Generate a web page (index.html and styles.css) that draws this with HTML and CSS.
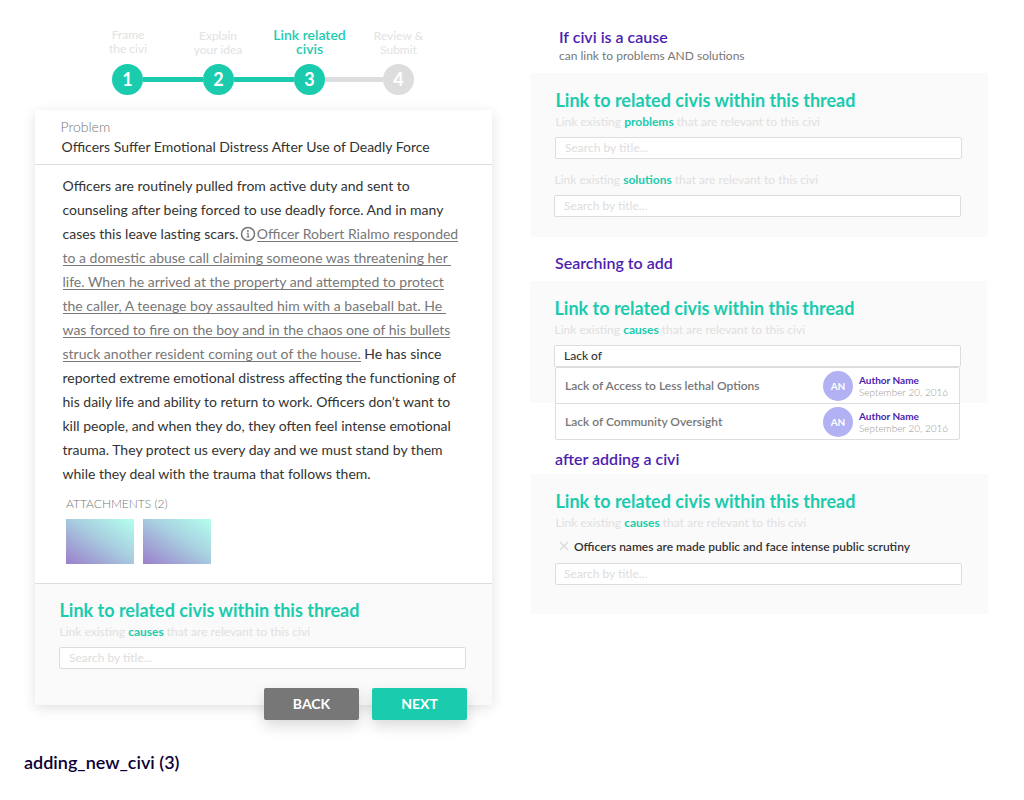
FILE: index.html
```html
<!DOCTYPE html>
<html lang="en">
<head>
<meta charset="utf-8">
<title>adding_new_civi</title>
<link rel="stylesheet" href="styles.css">
</head>
<body>
<div class="page">
  <main class="editor">
    <div class="stepper">
      <div class="step-labels">
        <div class="step-label first">Frame<br>the civi</div>
        <div class="step-label">Explain<br>your idea</div>
        <div class="step-label current">Link related<br>civis</div>
        <div class="step-label last">Review &amp;<br>Submit</div>
      </div>
      <div class="track">
        <span class="dot">1</span><span class="bar"></span><span class="dot">2</span><span class="bar"></span><span class="dot">3</span><span class="bar todo"></span><span class="dot todo">4</span>
      </div>
    </div>
    <section class="card">
      <header class="card-head">
        <div class="kind">Problem</div>
        <h1 class="title">Officers Suffer Emotional Distress After Use of Deadly Force</h1>
      </header>
      <div class="card-body">
        <p class="story">Officers are routinely pulled from active duty and sent to<br>counseling after being forced to use deadly force. And in many<br>cases this leave lasting scars.<svg class="info" viewBox="0 0 16 16"><circle cx="8" cy="8" r="6.5" fill="none" stroke="#777" stroke-width="1.5"/><circle cx="7.9" cy="5" r=".9" fill="#777"/><path d="M6.8 7.3H8.1V11M6.6 11H9.4" fill="none" stroke="#777" stroke-width="1.1"/></svg><span class="ref">Officer Robert Rialmo responded</span><br><span class="ref">to a domestic abuse call claiming someone was threatening her&nbsp;</span><br><span class="ref">life. When he arrived at the property and attempted to protect</span><br><span class="ref">the caller, A teenage boy assaulted him with a baseball bat. He&nbsp;</span><br><span class="ref">was forced to fire on the boy and in the chaos one of his bullets</span><br><span class="ref">struck another resident coming out of the house.</span> He has since<br>reported extreme emotional distress affecting the functioning of<br>his daily life and ability to return to work. Officers don’t want to<br>kill people, and when they do, they often feel intense emotional<br>trauma. They protect us every day and we must stand by them<br>while they deal with the trauma that follows them.</p>
        <div class="attach-label">ATTACHMENTS (2)</div>
        <div class="attachments"><div class="thumb"></div><div class="thumb"></div></div>
      </div>
      <footer class="card-foot">
        <h2 class="heading">Link to related civis within this thread</h2>
        <p class="hint">Link existing <b>causes</b> that are relevant to this civi</p>
        <div class="field">Search by title...</div>
        <div class="actions"><button class="btn back">BACK</button><button class="btn next">NEXT</button></div>
      </footer>
    </section>
    <div class="caption">adding_new_civi (3)</div>
  </main>
  <aside class="notes">
    <h3 class="note cause">If civi is a cause</h3>
    <p class="subnote">can link to problems AND solutions</p>
    <section class="panel two">
      <h2 class="heading">Link to related civis within this thread</h2>
      <p class="hint">Link existing <b>problems</b> that are relevant to this civi</p>
      <div class="field">Search by title...</div>
      <div class="second">
        <p class="hint">Link existing <b>solutions</b> that are relevant to this civi</p>
        <div class="field">Search by title...</div>
      </div>
    </section>
    <h3 class="note searching">Searching to add</h3>
    <section class="panel search">
      <h2 class="heading">Link to related civis within this thread</h2>
      <p class="hint">Link existing <b>causes</b> that are relevant to this civi</p>
      <div class="field typed">Lack of</div>
      <div class="results">
        <div class="result"><span class="name">Lack of Access to Less lethal Options</span><span class="avatar">AN</span><span class="by"><b>Author Name</b><span>September 20, 2016</span></span></div>
        <div class="result"><span class="name">Lack of Community Oversight</span><span class="avatar">AN</span><span class="by"><b>Author Name</b><span>September 20, 2016</span></span></div>
      </div>
    </section>
    <h3 class="note after">after adding a civi</h3>
    <section class="panel added">
      <h2 class="heading">Link to related civis within this thread</h2>
      <p class="hint">Link existing <b>causes</b> that are relevant to this civi</p>
      <div class="chosen"><svg class="remove" viewBox="0 0 10 10"><path d="M1 1L9 9M9 1L1 9" stroke="#d8d8d8" stroke-width="1.1"/></svg><span>Officers names are made public and face intense public scrutiny</span></div>
      <div class="field near">Search by title...</div>
    </section>
  </aside>
</div>
</body>
</html>
```
FILE: styles.css
```css
* { box-sizing: border-box; }
body, h1, h2, h3, p { margin: 0; font-weight: inherit; }
body { font-family: Lato, "Liberation Sans", sans-serif; background: #fff; color: #333; white-space: nowrap; }
.page { display: flex; width: 1024px; height: 800px; overflow: hidden; }
.editor { width: 492px; flex: none; padding: 28px 0 0 35px; }

.stepper { height: 82px; }
.step-labels { display: flex; padding-left: 48px; height: 36px; font-size: 12px; line-height: 14px; color: #e2e2e2; }
.step-label { width: 90px; text-align: center; padding-top: 1px; }
.step-label.first { padding-top: 0; }
.step-label.current { width: 93px; padding-top: 0; font-size: 14px; font-weight: 600; color: #1bcbae; }
.step-label.last { width: 85px; }
.track { display: flex; align-items: center; padding-left: 77px; }
.dot { width: 31px; height: 31px; border-radius: 50%; background: #1bcbae; color: #fff; font-size: 18px; font-weight: 700; line-height: 30px; text-align: center; }
.bar { width: 60px; height: 5px; background: #1bcbae; }
.bar.todo { width: 58px; background: #ddd; }
.dot.todo { background: #ddd; }

.card { width: 457px; height: 595px; border-radius: 3px; box-shadow: 0 3px 13px rgba(0,0,0,.12); display: flex; flex-direction: column; }
.card-head { flex: none; height: 55px; padding: 9px 0 0 25.5px; border-bottom: 1px solid #ddd; }
.kind { font-size: 14px; line-height: 16px; font-weight: 300; color: #777; }
.title { padding-left: 1px; font-size: 14px; line-height: 24px; font-weight: 400; color: #333; }
.card-body { flex: none; height: 419px; padding: 9px 0 0 27.5px; border-bottom: 1px solid #ddd; }
.story { font-size: 14px; line-height: 24px; }
.ref { display: inline-block; height: 20px; line-height: 24px; border-bottom: 1px solid #777; color: #777; vertical-align: top; }
.info { width: 16px; height: 16px; margin: 0 1px 0 1.5px; vertical-align: -3px; }
.attach-label { margin: 10px 0 0 3.5px; font-size: 12px; line-height: 16px; font-weight: 300; color: #777; }
.attachments { display: flex; gap: 9px; margin: 7px 0 0 3.5px; }
.thumb { width: 68px; height: 45px; background: linear-gradient(to top right, #9b7fcb, #a8cfe0 55%, #b4ffee); }
.card-foot { flex: 1; min-height: 0; background: #fafafa; padding: 14px 25px 0 24px; border-radius: 0 0 3px 3px; }

.heading { padding-left: .5px; font-size: 18px; line-height: 24px; font-weight: 700; color: #1bcbae; }
.hint { padding-left: .5px; margin-top: 2px; font-size: 12px; line-height: 16px; font-weight: 400; color: #e0e0e0; }
.hint b { font-weight: 700; color: #1bcbae; }
.field { width: 407px; height: 22px; margin-top: 7px; padding-left: 9px; border: 1px solid #ddd; border-radius: 2px; background: #fff; font-size: 12px; line-height: 19px; font-weight: 400; color: #ddd; }
.actions { display: flex; justify-content: flex-end; gap: 13px; margin-top: 19px; }
.btn { width: 95px; height: 32px; border: 0; border-radius: 2px; font: 700 14px/32px Lato, sans-serif; color: #fff; padding: 0; box-shadow: 0 6px 14px rgba(0,0,0,.15); }
.back { background: #777; }
.next { background: #1bcbae; }
.caption { margin: 45px 0 0 -11px; font-size: 18px; line-height: 24px; font-weight: 600; color: #0d0035; }

.notes { flex: 1; padding: 25px 0 0 39px; }
.note { padding-left: 24px; font-size: 16px; line-height: 24px; font-weight: 600; color: #4c1eb0; }
.note.cause { padding-left: 28px; }
.subnote { padding-left: 28px; font-size: 12px; line-height: 14px; color: #777; margin-bottom: 10px; }
.panel { width: 457px; padding: 15px 0 0 24px; border-radius: 2px; background: #fafafa; }
.panel.two { height: 164px; }
.second { margin: 13px 0 0 -1px; }
.searching { margin-top: 14px; }
.panel.search { height: 122px; margin: 6px 0 0 -1px; }
.typed { color: #333; font-weight: 500; }
.results { width: 405px; margin: 0 0 0 1px; border: 1px solid #ddd; border-radius: 2px; background: #fff; }
.result { display: flex; align-items: center; height: 35px; padding-left: 9px; }
.result + .result { height: 36px; border-top: 1px solid #ddd; }
.name { width: 258px; font-size: 12px; font-weight: 600; color: #777; }
.avatar { width: 30px; height: 30px; border-radius: 50%; background: #b1b1f4; color: #fff; font-size: 10px; font-weight: 700; line-height: 30px; text-align: center; }
.by { display: flex; flex-direction: column; margin-left: 6px; font-size: 10px; line-height: 12px; font-weight: 300; color: #999; }
.by b { font-weight: 700; color: #4c1eb0; }
.after { margin-top: 44px; }
.added { height: 140px; margin-top: 3px; }
.chosen { display: flex; align-items: center; height: 16px; margin: 7px 0 0 4px; gap: 5px; font-size: 12px; font-weight: 600; }
.remove { width: 10px; height: 10px; }
.near { margin-top: 9px; padding-left: 8px; }
```
